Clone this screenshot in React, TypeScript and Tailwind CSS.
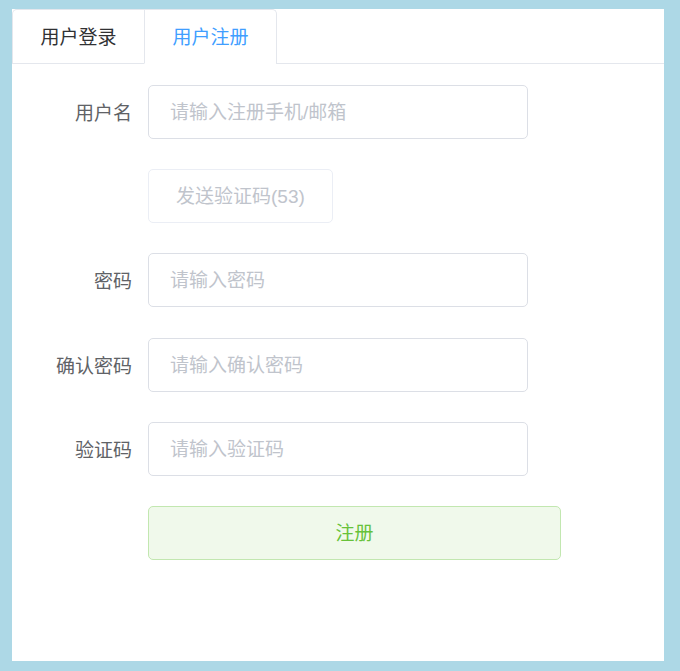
import React from "react";

const font = "font-['Liberation_Sans','Noto_Sans_CJK_SC',sans-serif]";

function Row({ label, placeholder, type = "text", mb = "mb-[30px]" }: { label: string; placeholder: string; type?: string; mb?: string }) {
  return (
    <div className={`flex items-center h-[54px] ${mb}`}>
      <label className="w-[136px] pr-[16px] pt-[2px] text-right text-[19px] text-[#606266] leading-none">{label}</label>
      <input
        type={type}
        placeholder={placeholder}
        className={`w-[380px] h-[54px] border border-[#dcdfe6] rounded-[5px] px-[21px] pt-[2px] text-[19px] text-[#606266] placeholder:text-[#c0c4cc] outline-none bg-white ${font}`}
      />
    </div>
  );
}

export default function App() {
  return (
    <div className={`w-[680px] h-[671px] bg-[#add8e6] pt-[9px] pl-[12px] ${font}`}>
      <div className="w-[652px] h-[652px] bg-white">
        <div className="flex h-[55px] border-b border-[#e4e7ed]">
          <div className="flex h-[55px] border border-b-0 border-[#e4e7ed] rounded-t-[5px]">
            <div className="w-[131px] h-[54px] pt-[3px] flex items-center justify-center text-[19px] text-[#303133] border-b border-[#e4e7ed]">
              用户登录
            </div>
            <div className="w-[132px] h-[54px] pt-[3px] flex items-center justify-center text-[19px] text-[#409eff] border-l border-b border-l-[#e4e7ed] border-b-white">
              用户注册
            </div>
          </div>
        </div>
        <div className="pt-[21px]">
          <Row label="用户名" placeholder="请输入注册手机/邮箱" />
          <div className="flex items-center h-[54px] mb-[30px]">
            <div className="w-[136px]" />
            <button
              disabled
              className={`h-[54px] px-[27px] pt-[2px] border border-[#ebeef5] rounded-[5px] bg-white text-[19px] text-[#c0c4cc] ${font}`}
            >
              发送验证码(53)
            </button>
          </div>
          <Row label="密码" placeholder="请输入密码" type="password" mb="mb-[31px]" />
          <Row label="确认密码" placeholder="请输入确认密码" type="password" />
          <Row label="验证码" placeholder="请输入验证码" />
          <div className="flex items-center h-[54px]">
            <div className="w-[136px]" />
            <button
              className={`w-[413px] h-[54px] pt-[2px] border border-[#c2e7b0] rounded-[5px] bg-[#f0f9eb] text-[19px] text-[#67c23a] ${font}`}
            >
              注册
            </button>
          </div>
        </div>
      </div>
    </div>
  );
}
